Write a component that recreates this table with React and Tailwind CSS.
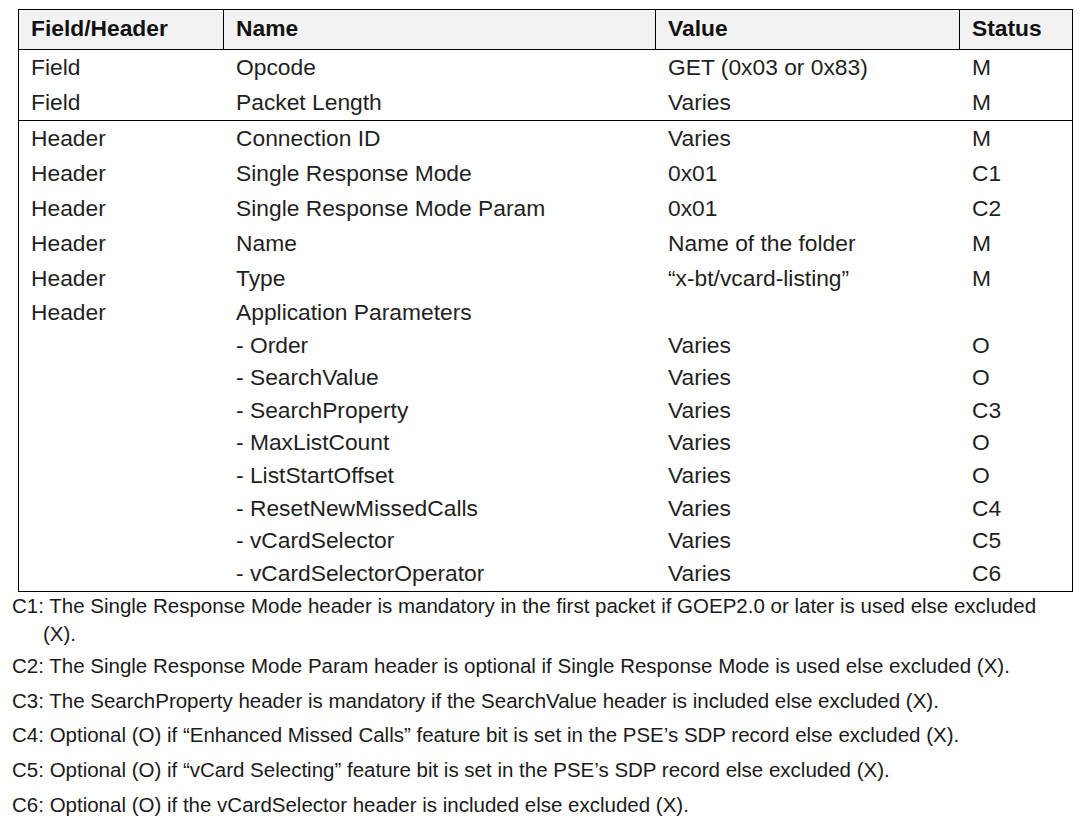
import React from 'react';

const headers = ['Field/Header', 'Name', 'Value', 'Status'];

const fieldRows = [
  ['Field', 'Opcode', 'GET (0x03 or 0x83)', 'M'],
  ['Field', 'Packet Length', 'Varies', 'M'],
];

const headerRows = [
  ['Header', 'Connection ID', 'Varies', 'M'],
  ['Header', 'Single Response Mode', '0x01', 'C1'],
  ['Header', 'Single Response Mode Param', '0x01', 'C2'],
  ['Header', 'Name', 'Name of the folder', 'M'],
  ['Header', 'Type', '\u201cx-bt/vcard-listing\u201d', 'M'],
];

const appParams = [
  ['Header', 'Application Parameters', '', ''],
  ['', '- Order', 'Varies', 'O'],
  ['', '- SearchValue', 'Varies', 'O'],
  ['', '- SearchProperty', 'Varies', 'C3'],
  ['', '- MaxListCount', 'Varies', 'O'],
  ['', '- ListStartOffset', 'Varies', 'O'],
  ['', '- ResetNewMissedCalls', 'Varies', 'C4'],
  ['', '- vCardSelector', 'Varies', 'C5'],
  ['', '- vCardSelectorOperator', 'Varies', 'C6'],
];

const notes = [
  { id: 'C2', text: 'The Single Response Mode Param header is optional if Single Response Mode is used else excluded (X).', gap: 'mt-[4px]' },
  { id: 'C3', text: 'The SearchProperty header is mandatory if the SearchValue header is included else excluded (X).', gap: 'mt-[6.7px]' },
  { id: 'C4', text: 'Optional (O) if \u201cEnhanced Missed Calls\u201d feature bit is set in the PSE\u2019s SDP record else excluded (X).', gap: 'mt-[6.7px]' },
  { id: 'C5', text: 'Optional (O) if \u201cvCard Selecting\u201d feature bit is set in the PSE\u2019s SDP record else excluded (X).', gap: 'mt-[6.7px]' },
  { id: 'C6', text: 'Optional (O) if the vCardSelector header is included else excluded (X).', gap: 'mt-[6.7px]' },
];

const cols = 'grid grid-cols-[205px_432px_304px_112px]';

const Row = ({ cells, className }) => (
  <div className={`${cols} ${className}`}>
    {cells.map((c, i) => (
      <div key={i} className="pl-3 whitespace-nowrap">{c}</div>
    ))}
  </div>
);

const App = () => {
  return (
    <div className="w-[1087px] h-[818px] bg-white pt-[9px] font-['Liberation_Sans',Arial,sans-serif] text-[#1f1f1f] overflow-hidden">
      <div className="ml-[18px] w-[1055px] border border-black text-[22.8px]">
        <div className={`${cols} h-[40px] bg-[#f2f2f2] border-b border-black font-bold text-[#111]`}>
          {headers.map((h, i) => (
            <div key={h} className={`pl-3 pb-[2px] flex items-center ${i < 3 ? 'border-r border-black' : ''}`}>{h}</div>
          ))}
        </div>
        <div className="border-b border-black">
          {fieldRows.map((r, i) => (
            <Row key={i} cells={r} className="h-[35px] pb-[2px] items-center" />
          ))}
        </div>
        <div className="pb-[1.6px]">
          {headerRows.map((r, i) => (
            <Row key={i} cells={r} className="h-[35px] pb-[2px] items-center" />
          ))}
          {appParams.map((r, i) => (
            <Row key={i} cells={r} className="leading-[32.6px]" />
          ))}
        </div>
      </div>

      <div className="pl-[12px] text-[20.5px] leading-[28px] text-[#1a1a1a]">
        <p className="pl-[31px] indent-[-31px]">
          C1: The Single Response Mode header is mandatory in the first packet if GOEP2.0 or later is used else excluded
          <br />
          (X).
        </p>
        {notes.map((n) => (
          <p key={n.id} className={`${n.gap} whitespace-nowrap`}>
            {n.id}: {n.text}
          </p>
        ))}
      </div>
    </div>
  );
};

export default App;
